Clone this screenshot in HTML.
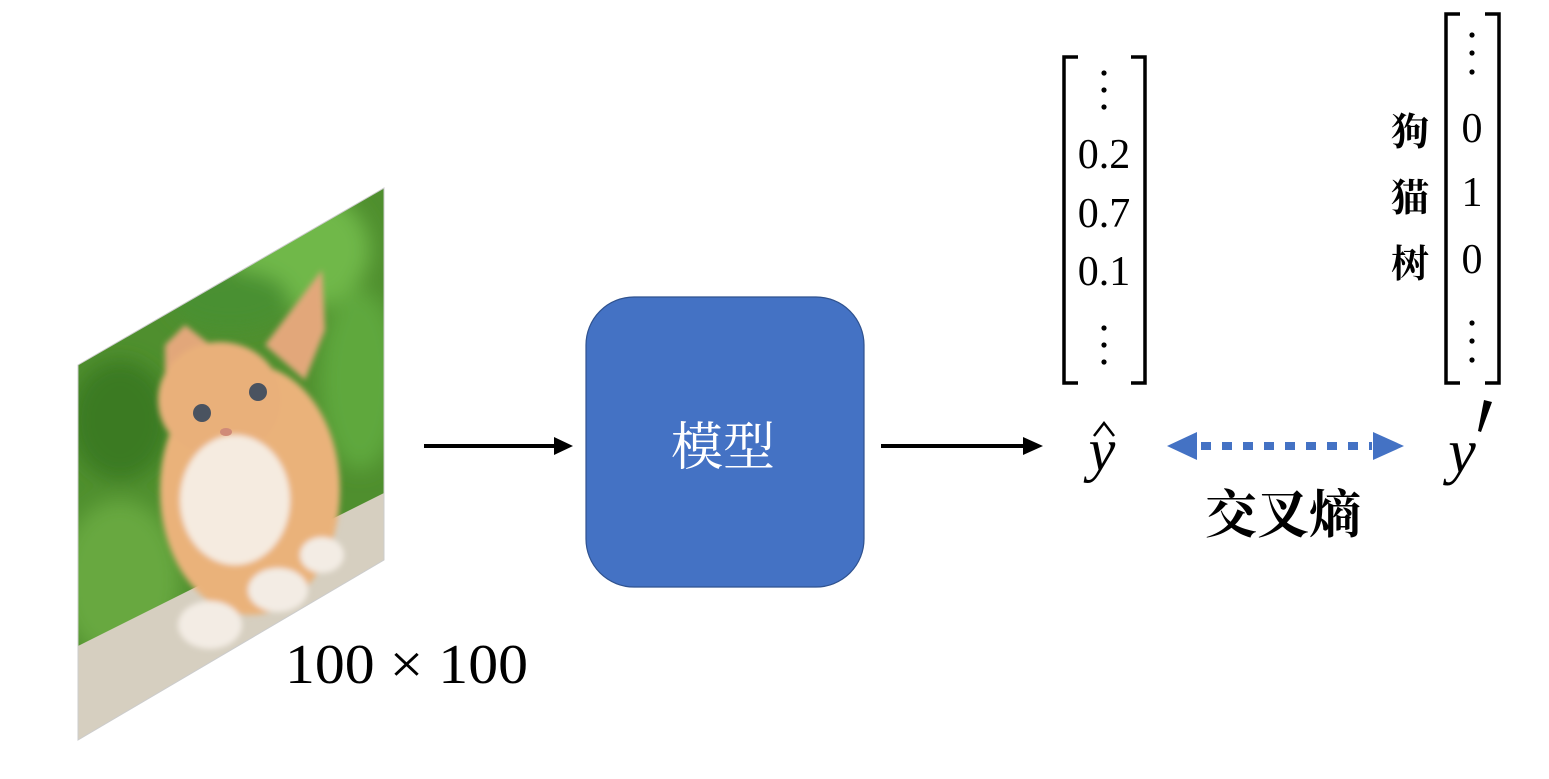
<!DOCTYPE html>
<html><head><meta charset="utf-8"><style>
html,body{margin:0;padding:0;background:#fff;}
svg{display:block}
</style></head><body>
<svg width="1549" height="779" viewBox="0 0 1549 779" xmlns="http://www.w3.org/2000/svg">
<defs>
<clipPath id="pg"><polygon points="78,365 384,188 384,560 78,740"/></clipPath>
<filter id="bl" x="-20%" y="-20%" width="140%" height="140%"><feGaussianBlur stdDeviation="10"/></filter>
<filter id="bl2"><feGaussianBlur stdDeviation="3"/></filter>
</defs>
<g clip-path="url(#pg)">
<rect x="70" y="180" width="320" height="570" fill="#4f8f2e"/>
<g filter="url(#bl)">
<ellipse cx="300" cy="250" rx="70" ry="60" fill="#6fb84a"/>
<ellipse cx="120" cy="420" rx="50" ry="60" fill="#3a7a22"/>
<ellipse cx="360" cy="380" rx="40" ry="90" fill="#5fa83c"/>
<ellipse cx="120" cy="580" rx="60" ry="80" fill="#68a83f"/>
<ellipse cx="230" cy="300" rx="60" ry="30" fill="#4a9030"/>
</g>
<polygon points="70,650 390,490 390,750 70,750" fill="#d6cfc0"/>
<g filter="url(#bl2)">
<polygon points="165,345 185,325 230,360 165,400" fill="#e2a77a"/>
<polygon points="265,345 322,270 325,330 305,380" fill="#e2a77a"/>
<ellipse cx="250" cy="490" rx="90" ry="125" fill="#eab27a"/>
<ellipse cx="220" cy="400" rx="62" ry="58" fill="#e9b07a"/>
<ellipse cx="235" cy="500" rx="55" ry="65" fill="#f5ebe0"/>
<ellipse cx="210" cy="625" rx="32" ry="24" fill="#f3ece4"/>
<ellipse cx="278" cy="590" rx="30" ry="22" fill="#f3ece4"/>
<ellipse cx="322" cy="555" rx="22" ry="18" fill="#f3ece4"/>
</g>
<circle cx="202" cy="413" r="9" fill="#4a5360"/>
<circle cx="258" cy="392" r="9" fill="#4a5360"/>
<ellipse cx="226" cy="432" rx="6" ry="4" fill="#d08a78"/>
</g>
<polygon points="78,365 384,188 384,560 78,740" fill="none" stroke="#ccc" stroke-width="1"/>
<text x="285" y="683" font-family="Liberation Serif, serif" font-size="56" textLength="243" lengthAdjust="spacingAndGlyphs" fill="#000">100 × 100</text>

<line x1="424" y1="446" x2="556" y2="446" stroke="#000" stroke-width="4"/>
<polygon points="554,437 573,446 554,455" fill="#000"/>
<rect x="586" y="297" width="278" height="290" rx="48" fill="#4472c4" stroke="#2f528f" stroke-width="1.2"/>
<text x="723" y="465" text-anchor="middle" font-family="Liberation Serif, 'Noto Serif CJK SC', serif" font-size="52" fill="#fff">模型</text>
<line x1="881" y1="446" x2="1025" y2="446" stroke="#000" stroke-width="4"/>
<polygon points="1023,437 1043,446 1023,455" fill="#000"/>

<g stroke="#000" stroke-width="3.5" fill="none">
<polyline points="1078,57 1064,57 1064,383 1078,383"/>
<polyline points="1131,57 1145,57 1145,383 1131,383"/>
<polyline points="1460,14 1446,14 1446,383 1460,383"/>
<polyline points="1485,14 1499,14 1499,383 1485,383"/>
</g>
<g fill="#000">
<circle cx="1104" cy="73" r="2.6"/><circle cx="1104" cy="90" r="2.6"/><circle cx="1104" cy="107" r="2.6"/>
<circle cx="1104" cy="328" r="2.6"/><circle cx="1104" cy="345" r="2.6"/><circle cx="1104" cy="362" r="2.6"/>
<circle cx="1472" cy="35" r="2.6"/><circle cx="1472" cy="53" r="2.6"/><circle cx="1472" cy="72" r="2.6"/>
<circle cx="1472" cy="323" r="2.6"/><circle cx="1472" cy="341" r="2.6"/><circle cx="1472" cy="360" r="2.6"/>
</g>
<g font-family="Liberation Serif, serif" font-size="42" fill="#000" text-anchor="middle">
<text x="1104" y="168">0.2</text>
<text x="1104" y="227">0.7</text>
<text x="1104" y="285">0.1</text>
<text x="1472" y="142">0</text>
<text x="1472" y="206">1</text>
<text x="1472" y="273">0</text>
</g>
<g font-family="Liberation Serif, 'Noto Serif CJK SC', serif" font-size="38" font-weight="bold" fill="#000" text-anchor="middle">
<text x="1410" y="145">狗</text>
<text x="1410" y="211">猫</text>
<text x="1410" y="277">树</text>
</g>
<text x="1102" y="470" text-anchor="middle" font-family="Liberation Serif, serif" font-style="italic" font-size="60" fill="#000">y</text>
<path d="M1094,436 L1104,423 L1114,436" fill="none" stroke="#000" stroke-width="2.5"/>
<text x="1462" y="472" text-anchor="middle" font-family="Liberation Serif, serif" font-style="italic" font-size="62" fill="#000">y</text>
<path d="M1484,400 L1492,402 L1481,432 L1478,431 Z" fill="#000"/>

<polygon points="1167,446 1197,432 1197,460" fill="#4472c4"/>
<polygon points="1404,446 1373,432 1373,460" fill="#4472c4"/>
<line x1="1201" y1="446" x2="1372" y2="446" stroke="#4472c4" stroke-width="8" stroke-dasharray="10,11"/>
<text x="1283" y="533" text-anchor="middle" font-family="Liberation Serif, 'Noto Serif CJK SC', serif" font-size="52" font-weight="bold" fill="#000">交叉熵</text>
</svg>
</body></html>
